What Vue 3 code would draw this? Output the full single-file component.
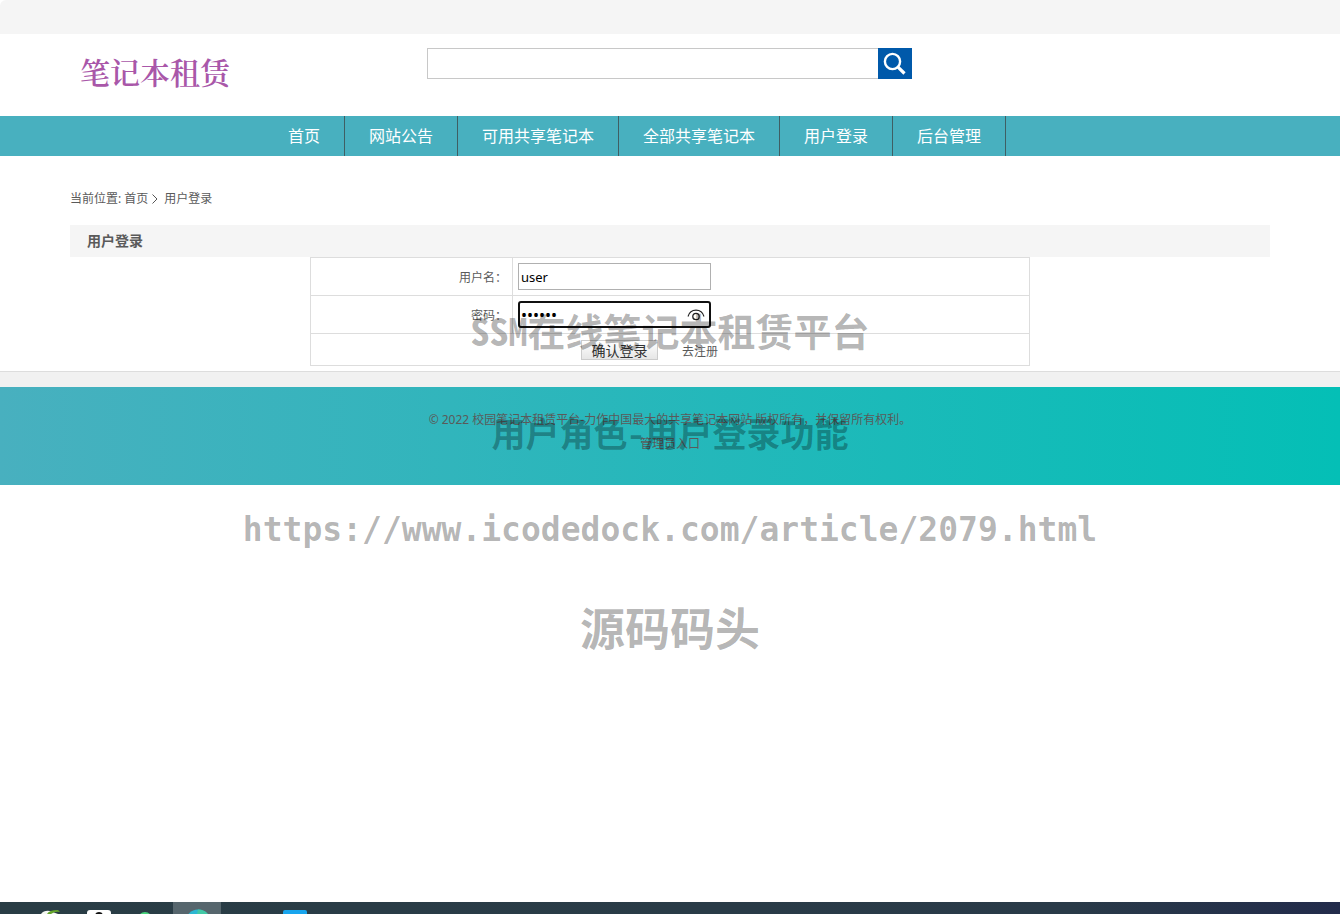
<script setup>
import { ref } from 'vue'

const keyword = ref('')
const username = ref('user')
const password = ref('123456')
const menu = ['首页', '网站公告', '可用共享笔记本', '全部共享笔记本', '用户登录', '后台管理']
</script>

<template>
  <div class="page">
    <div class="topbar"></div>

    <header class="header wrap">
      <a class="logo" href="#">笔记本租赁</a>
      <form class="search" @submit.prevent>
        <input v-model="keyword" type="text" aria-label="搜索" />
        <button type="submit" aria-label="搜索">
          <svg viewBox="0 0 34 31" width="34" height="31">
            <circle cx="14.5" cy="13.5" r="7.6" fill="none" stroke="#fff" stroke-width="2.4" />
            <path d="M19.8 18.8L26.5 25.5" stroke="#fff" stroke-width="3.2" />
          </svg>
        </button>
      </form>
    </header>

    <nav class="nav">
      <ul class="wrap">
        <li v-for="item in menu" :key="item"><a href="#">{{ item }}</a></li>
      </ul>
    </nav>

    <main class="wrap">
      <div class="crumbs">
        <span>当前位置:</span>
        <a href="#">首页</a>
        <svg viewBox="0 0 8 10" width="8" height="10"><path d="M1.5 0.5L6 5L1.5 9.5" fill="none" stroke="#555" /></svg>
        <span class="here">用户登录</span>
      </div>
      <h1 class="title">用户登录</h1>
      <form @submit.prevent>
        <table class="login">
          <tbody>
            <tr>
              <th><label for="user">用户名：</label></th>
              <td><input id="user" v-model="username" type="text" /></td>
            </tr>
            <tr>
              <th><label for="pass">密码：</label></th>
              <td>
                <div class="secret">
                  <input id="pass" v-model="password" type="password" />
                  <svg viewBox="0 0 18 12" width="18" height="12">
                    <path d="M1 7.500C3.500 -1 14.500 -1 17 7.500" fill="none" stroke="#222" stroke-width="1.1" />
                    <circle cx="9" cy="7.5" r="3.2" fill="none" stroke="#222" stroke-width="1.3" />
                  </svg>
                </div>
              </td>
            </tr>
            <tr>
              <td colspan="2">
                <div class="actions">
                  <button type="submit">确认登录</button>
                  <a href="#">去注册</a>
                </div>
              </td>
            </tr>
          </tbody>
        </table>
      </form>
    </main>

    <div class="strip"></div>
    <footer class="footer">
      <p>© 2022 校园笔记本租赁平台-力作中国最大的共享笔记本网站 版权所有，并保留所有权利。</p>
      <p><a href="#">管理员入口</a></p>
    </footer>

    <div class="taskbar">
      <svg viewBox="0 0 320 12" width="320" height="12">
        <rect x="173" y="0" width="48" height="12" fill="#56666d" />
        <path d="M41 12Q44 8 50 9L58 12Z" fill="#f4f7f2" />
        <path d="M47 12Q49 8 58 8L60 10Q55 9 51 12Z" fill="#65a52b" />
        <rect x="87" y="8" width="24" height="10" rx="3" fill="#fff" />
        <circle cx="99" cy="14" r="4" fill="#111" />
        <circle cx="145" cy="17" r="7" fill="#48d47c" />
        <circle cx="198" cy="20" r="12.5" fill="#2cb7d2" />
        <path d="M198 7.500A12.500 12.500 0 0 1 208 12H197Z" fill="#42c9a6" />
        <rect x="283" y="8" width="24" height="10" rx="2" fill="#18a5ee" />
      </svg>
    </div>

    <div class="marks">
      <div class="first">SSM在线笔记本租赁平台</div>
      <div class="second">用户角色-用户登录功能</div>
      <div class="url">https://www.icodedock.com/article/2079.html</div>
      <div class="brand">源码码头</div>
    </div>
  </div>
</template>

<style>
body {
  margin: 0;
  background: #fff;
}
</style>

<style scoped>
* {
  box-sizing: border-box;
}
.page {
  position: relative;
  display: flex;
  flex-direction: column;
  min-height: 100vh;
  color: #5a5a5a;
  font: 12px/24px "Noto Sans", "Noto Sans CJK SC", sans-serif;
}
a {
  color: inherit;
  text-decoration: none;
}
.wrap {
  width: 100%;
  max-width: 1200px;
  margin: 0 auto;
}
.topbar {
  height: 34px;
  background: #f5f5f5;
  border-top-left-radius: 6px;
}
.header {
  display: grid;
  grid-template-columns: 1fr 486px 1fr;
  min-height: 82px;
  padding: 14px 0 20px;
}
.logo {
  padding: 0 10px;
  color: #a957a9;
  font: 600 30px/46px "Noto Serif CJK SC", "Liberation Serif", "Noto Sans CJK SC", serif;
}
.search {
  display: flex;
  height: 31px;
  padding-right: 1px;
}
.search input {
  flex: 1;
  min-width: 0;
  padding: 0 6px;
  border: 1px solid #c8c8c8;
  border-right: 0;
  outline: 0;
}
.search button {
  width: 34px;
  padding: 0;
  border: 0;
  background: #0059aa;
}
.search svg {
  display: block;
}
.nav {
  background: #48b0bf;
}
.nav ul {
  display: flex;
  padding: 0 0 0 194px;
  list-style: none;
}
.nav li {
  padding: 0 24px;
  border-right: 1px solid #3f5f63;
  color: #fff;
  font-size: 16px;
  line-height: 40px;
}
.crumbs {
  display: flex;
  align-items: center;
  gap: 3px;
  padding: 31px 0 14px;
}
.here {
  margin-left: 2px;
}
.title {
  margin: 0;
  padding: 0 17px;
  background: #f5f5f5;
  font-size: 14px;
  line-height: 32px;
}
.login {
  width: 60%;
  margin: 0 auto 5px;
  border-collapse: collapse;
}
.login th,
.login td {
  padding: 5px;
  border: 1px solid #ddd;
}
.login th {
  width: 202px;
  padding: 7px 5px 5px;
  font-weight: 400;
  text-align: right;
}
.login input {
  display: block;
  width: 193px;
  height: 27px;
  padding: 0 2px;
  border: 1px solid #b0b0b0;
  color: #000;
  font: 13px/20px "Noto Sans", sans-serif;
}
.secret {
  position: relative;
  width: 193px;
}
.login .secret input {
  padding: 0 1px;
  border: 2px solid #101010;
  border-radius: 3px;
  outline: 0;
  font-size: 16px;
}
.secret svg {
  position: absolute;
  top: 8px;
  right: 6px;
}
.actions {
  display: flex;
  align-items: center;
  justify-content: center;
  gap: 24px;
  padding-right: 41px;
  height: 21px;
}
.actions a {
  padding-top: 4px;
}
.login td[colspan] {
  padding-left: 0;
  padding-right: 0;
}
.actions button {
  width: 77px;
  height: 20px;
  padding: 0;
  border: 1px solid #ccc;
  background: linear-gradient(#fff, #e6e6e6);
  color: #333;
  font: 14px/18px "Noto Sans CJK SC", sans-serif;
}
.strip {
  height: 16px;
  border-top: 1px solid #ddd;
  background: #f1f1f1;
}
.footer {
  padding: 21px 0 29px;
  background: linear-gradient(to right, #48b0bf, #04bfb6);
  text-align: center;
}
.footer p {
  margin: 0;
}
.taskbar {
  height: 12px;
  margin-top: auto;
  overflow: hidden;
  background: linear-gradient(to right, #293d45, #293a48 80%, #222b4b);
}
.taskbar svg {
  display: block;
}
.marks {
  position: absolute;
  top: 300px;
  left: 0;
  right: 0;
  display: flex;
  flex-direction: column;
  gap: 49px;
  color: rgba(0, 0, 0, 0.3);
  font-family: "Noto Sans Mono CJK SC", "Liberation Mono", "Noto Sans CJK SC", monospace;
  font-weight: 700;
  line-height: 48px;
  text-align: center;
  pointer-events: none;
}
.first {
  font-size: 38px;
  line-height: 60px;
}
.second {
  font-size: 34px;
}
.url {
  font-family: "DejaVu Sans Mono", monospace;
  font-size: 33px;
}
.brand {
  font-size: 45px;
}
</style>
